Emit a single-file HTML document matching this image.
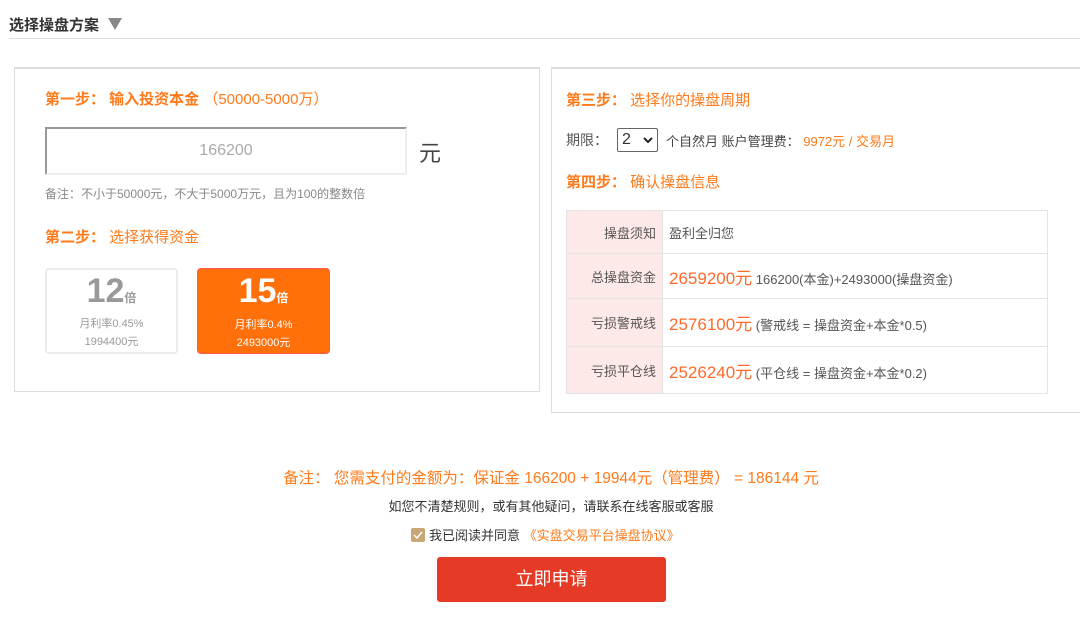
<!DOCTYPE html>
<html><head><meta charset="utf-8"><style>
*{margin:0;padding:0;box-sizing:border-box}
body{width:1080px;height:623px;background:#fff;font-family:"Liberation Sans","Noto Sans CJK SC",sans-serif;position:relative;overflow:hidden;color:#333}
.a{position:absolute;white-space:nowrap}
.o{color:#ff7a1a}
.box{position:absolute;border:1px solid #ddd;border-width:2px 1px 1px 1px}
table{border-collapse:collapse;position:absolute;left:566px;top:210px;width:482px}
td{border:1px solid #e4e4e4;font-size:13px;color:#555}
td.h{background:#fde9e8;text-align:right;padding-right:6px;width:96px}
td.v{padding-left:6px}
.big{color:#ff6a2a;font-size:17px}
.card{position:absolute;top:268px;width:133px;height:86px;border-radius:4px;text-align:center}
</style></head><body>
<div class="a" style="left:9px;top:14px;font-size:15px;font-weight:bold;color:#333">选择操盘方案</div>
<svg class="a" style="left:108px;top:18px" width="14" height="12"><polygon points="0,0 14,0 7,12" fill="#888"/></svg>
<div class="a" style="left:9px;top:38px;width:1071px;height:1px;background:#ddd"></div>

<div class="box" style="left:14px;top:67px;width:526px;height:325px"></div>
<div class="a o" style="left:45px;top:88px;font-size:15px"><b>第一步： 输入投资本金</b> （50000-5000万）</div>
<div class="a" style="left:45px;top:127px;width:362px;height:48px;border:2px solid #999;border-right-color:#eee;border-bottom-color:#eee;text-align:center;line-height:44px;font-size:16px;color:#aaa">166200</div>
<div class="a" style="left:419px;top:136px;font-size:22px;color:#444">元</div>
<div class="a" style="left:45px;top:185px;font-size:12px;color:#888">备注：不小于50000元，不大于5000万元，且为100的整数倍</div>
<div class="a o" style="left:45px;top:226px;font-size:15px"><b>第二步：</b> 选择获得资金</div>
<div class="card" style="left:45px;border:2px solid #ebebeb;color:#999">
<div style="margin-top:3px;font-size:34px;font-weight:bold;line-height:36px;color:#999">12<span style="font-size:12px">倍</span></div>
<div style="font-size:11px;margin-top:0px;line-height:16px">月利率0.45%</div><div style="font-size:11px;margin-top:2px;line-height:16px">1994400元</div></div>
<div class="card" style="left:197px;background:#ff6f0a;border:1px solid #f55;color:#fff">
<div style="margin-top:4px;font-size:34px;font-weight:bold;line-height:36px">15<span style="font-size:12px">倍</span></div>
<div style="font-size:11px;margin-top:1px;line-height:16px">月利率0.4%</div><div style="font-size:11px;margin-top:2px;line-height:16px">2493000元</div></div>

<div class="box" style="left:551px;top:67px;width:540px;height:346px"></div>
<div class="a o" style="left:566px;top:89px;font-size:15px"><b>第三步：</b> 选择你的操盘周期</div>
<div class="a" style="left:566px;top:130px;font-size:14px;color:#555">期限：</div>
<div class="a" style="left:617px;top:128px;width:41px;height:24px;border:1px solid #666;border-radius:2px;font-size:16px;padding-left:4px;line-height:22px">2<svg style="position:absolute;right:4px;top:8px" width="10" height="7"><polyline points="1,1 5,5 9,1" fill="none" stroke="#222" stroke-width="2"/></svg></div>
<div class="a" style="left:666px;top:131px;font-size:13px;color:#444">个自然月 账户管理费： <span class="o">9972元 / 交易月</span></div>
<div class="a o" style="left:566px;top:171px;font-size:15px"><b>第四步：</b> 确认操盘信息</div>
<table>
<tr style="height:43px"><td class="h">操盘须知</td><td class="v">盈利全归您</td></tr>
<tr style="height:45px"><td class="h">总操盘资金</td><td class="v"><span class="big">2659200元</span> 166200(本金)+2493000(操盘资金)</td></tr>
<tr style="height:48px"><td class="h">亏损警戒线</td><td class="v"><span class="big">2576100元</span> (警戒线 = 操盘资金+本金*0.5)</td></tr>
<tr style="height:47px"><td class="h">亏损平仓线</td><td class="v"><span class="big">2526240元</span> (平仓线 = 操盘资金+本金*0.2)</td></tr>
</table>

<div class="a o" style="left:0;width:1102px;text-align:center;top:466px;font-size:15.5px">备注： 您需支付的金额为：保证金 166200 + 19944元（管理费） = 186144 元</div>
<div class="a" style="left:0;width:1102px;text-align:center;top:496px;font-size:13px;color:#333">如您不清楚规则，或有其他疑问，请联系在线客服或客服</div>
<div class="a" style="left:411px;top:525px;font-size:13px;color:#333"><span style="display:inline-block;width:14px;height:14px;background:#c8a676;border-radius:2px;vertical-align:-2px;margin-right:4px;position:relative"><svg style="position:absolute;left:2px;top:3px" width="10" height="8"><polyline points="1,4 4,7 9,1" fill="none" stroke="#fff" stroke-width="1.5"/></svg></span>我已阅读并同意 <span class="o">《实盘交易平台操盘协议》</span></div>
<div class="a" style="left:437px;top:557px;width:229px;height:45px;background:#e53a25;border-radius:3px;color:#fff;font-size:18px;text-align:center;line-height:45px">立即申请</div>
</body></html>
